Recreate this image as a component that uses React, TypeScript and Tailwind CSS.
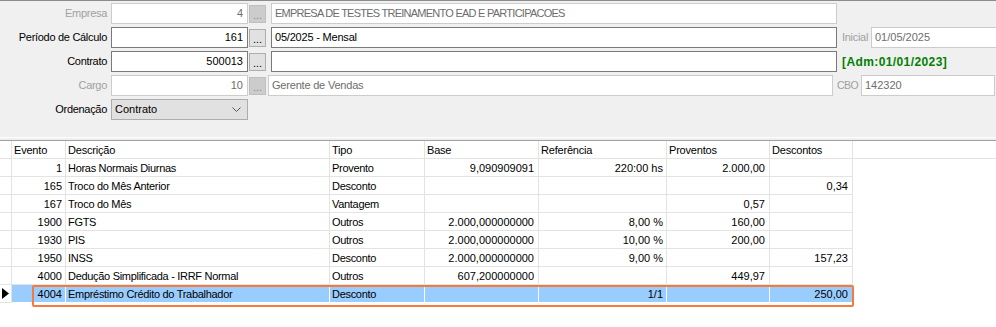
import React from "react";

type Row = {
  ev: string;
  desc: string;
  tipo: string;
  base: string;
  ref: string;
  prov: string;
  dsc: string;
  sel?: boolean;
};

const rows: Row[] = [
  { ev: "1", desc: "Horas Normais Diurnas", tipo: "Provento", base: "9,090909091", ref: "220:00 hs", prov: "2.000,00", dsc: "" },
  { ev: "165", desc: "Troco do Mês Anterior", tipo: "Desconto", base: "", ref: "", prov: "", dsc: "0,34" },
  { ev: "167", desc: "Troco do Mês", tipo: "Vantagem", base: "", ref: "", prov: "0,57", dsc: "" },
  { ev: "1900", desc: "FGTS", tipo: "Outros", base: "2.000,000000000", ref: "8,00 %", prov: "160,00", dsc: "" },
  { ev: "1930", desc: "PIS", tipo: "Outros", base: "2.000,000000000", ref: "10,00 %", prov: "200,00", dsc: "" },
  { ev: "1950", desc: "INSS", tipo: "Desconto", base: "2.000,000000000", ref: "9,00 %", prov: "", dsc: "157,23" },
  { ev: "4000", desc: "Dedução Simplificada - IRRF Normal", tipo: "Outros", base: "607,200000000", ref: "", prov: "449,97", dsc: "" },
  { ev: "4004", desc: "Empréstimo Crédito do Trabalhador", tipo: "Desconto", base: "", ref: "1/1", prov: "", dsc: "250,00", sel: true },
];

// label column ends at x=107, inputs start at 111
function Label({ text, disabled }: { text: string; disabled?: boolean }) {
  return (
    <div className={`w-[107px] shrink-0 text-right tracking-[-0.3px] ${disabled ? "text-[#a0a0a0]" : "text-black"}`}>{text}</div>
  );
}

function Lookup({ value, disabled }: { value: string; disabled?: boolean }) {
  return (
    <div className="flex items-center shrink-0">
      <div
        className={`w-[137px] h-[21px] bg-white border flex items-center justify-end pr-[4px] ${
          disabled ? "border-[#cccccc] text-[#6d6d6d]" : "border-[#7a7a7a] text-black"
        }`}
      >
        {value}
      </div>
      <div
        className={`ml-[1px] w-[17px] h-[18px] border flex items-end justify-center leading-[12px] pb-[1px] ${
          disabled ? "bg-[#cccccc] border-[#bfbfbf] text-[#8a8a8a]" : "bg-[#e1e1e1] border-[#adadad] text-black"
        }`}
      >
        ...
      </div>
    </div>
  );
}

function TextBox({ value, w, disabled, ml, caps }: { value: string; w: string; disabled?: boolean; ml: string; caps?: boolean }) {
  return (
    <div
      className={`${w} ${ml} shrink-0 h-[21px] bg-white border flex items-center pl-[3px] whitespace-nowrap overflow-hidden ${
        caps ? "tracking-[-0.75px]" : "tracking-[-0.2px]"
      } ${disabled ? "border-[#cccccc] text-[#6d6d6d]" : "border-[#7a7a7a] text-black"}`}
    >
      {value}
    </div>
  );
}

const cols = [
  { key: "ev", title: "Evento", w: "w-[54px]", right: true, pr: "pr-[3px]" },
  { key: "desc", title: "Descrição", w: "w-[264px]", right: false, pr: "" },
  { key: "tipo", title: "Tipo", w: "w-[95px]", right: false, pr: "" },
  { key: "base", title: "Base", w: "w-[114px]", right: true, pr: "pr-[4px]" },
  { key: "ref", title: "Referência", w: "w-[128px]", right: true, pr: "pr-[3px]" },
  { key: "prov", title: "Proventos", w: "w-[103px]", right: true, pr: "pr-[4px]" },
  { key: "dsc", title: "Descontos", w: "w-[83px]", right: true, pr: "pr-[4px]" },
] as const;

export default function App() {
  return (
    <div
      className="w-[996px] h-[327px] overflow-hidden bg-white text-[11px] flex flex-col"
      style={{ fontFamily: '"Liberation Sans", Arial, sans-serif' }}
    >
      {/* form panel */}
      <div className="h-[137px] shrink-0 bg-[#f0f0f0] border-t border-[#8c8c8c] pt-[2px] flex flex-col gap-[3px]">
        <div className="flex items-center h-[21px] gap-[4px]">
          <Label text="Empresa" disabled />
          <Lookup value="4" disabled />
          <TextBox value="EMPRESA DE TESTES TREINAMENTO EAD E PARTICIPACOES" w="w-[566px]" ml="ml-[1px]" disabled caps />
        </div>
        <div className="flex items-center h-[21px] gap-[4px]">
          <Label text="Período de Cálculo" />
          <Lookup value="161" />
          <TextBox value="05/2025 - Mensal" w="w-[566px]" ml="ml-[1px]" />
          <div className="ml-[1px] w-[25px] shrink-0 text-[#a0a0a0] tracking-[-0.3px]">Inicial</div>
          <div className="shrink-0 w-[140px] h-[21px] bg-white border border-[#cccccc] text-[#6d6d6d] flex items-center pl-[3px]">
            01/05/2025
          </div>
        </div>
        <div className="flex items-center h-[21px] gap-[4px]">
          <Label text="Contrato" />
          <Lookup value="500013" />
          <TextBox value="" w="w-[566px]" ml="ml-[1px]" />
          <div className="ml-[1px] shrink-0 text-[#008000] font-bold text-[12px] tracking-[0.4px]">[Adm:01/01/2023]</div>
        </div>
        <div className="flex items-center h-[21px] gap-[4px]">
          <Label text="Cargo" disabled />
          <Lookup value="10" disabled />
          <TextBox value="Gerente de Vendas" w="w-[565px]" ml="-ml-[2px]" disabled />
          <div className="w-[21px] shrink-0 text-[#a0a0a0] text-[10.5px] tracking-[-0.6px] whitespace-nowrap">CBO</div>
          <div className="-ml-[1px] shrink-0 w-[134px] h-[21px] bg-white border border-[#cccccc] text-[#6d6d6d] flex items-center pl-[3px]">
            142320
          </div>
        </div>
        <div className="flex items-center h-[21px] gap-[4px]">
          <Label text="Ordenação" />
          <div className="w-[137px] shrink-0 h-[21px] bg-[#e1e1e1] border border-[#adadad] flex items-center justify-between pl-[3px] pr-[6px] text-black">
            <span>Contrato</span>
            <svg width="9" height="5" viewBox="0 0 9 5" fill="none" stroke="#555" strokeWidth="1">
              <path d="M0.5 0.5 L4.5 4.5 L8.5 0.5" />
            </svg>
          </div>
        </div>
      </div>

      {/* splitter */}
      <div className="h-[1px] shrink-0 bg-white" />
      <div className="h-[2px] shrink-0 bg-[#f0f0f0]" />
      <div className="h-[1px] shrink-0 bg-[#a0a0a0]" />

      {/* grid */}
      <div className="relative flex-1 bg-white text-black">
        <div className="flex h-[18px] border-b border-[#e3e3e3]">
          <div className="w-[12px] shrink-0 border-r border-[#e3e3e3]" />
          {cols.map((c) => (
            <div key={c.key} className={`${c.w} shrink-0 border-r border-[#e3e3e3] pl-[2px] pt-[1px] flex items-center tracking-[-0.2px]`}>
              {c.title}
            </div>
          ))}
        </div>
        {rows.map((r) => (
          <div key={r.ev} className="flex h-[18px]">
            <div className="w-[12px] shrink-0 border-r border-b border-[#e3e3e3] flex items-center pl-[2px]">
              {r.sel && (
                <svg width="7" height="11" viewBox="0 0 7 11">
                  <path d="M0 0 L7 5.5 L0 11 Z" fill="#000" />
                </svg>
              )}
            </div>
            {cols.map((c) => (
              <div
                key={c.key}
                className={`${c.w} shrink-0 border-r border-b flex items-center pt-[1px] whitespace-nowrap overflow-hidden ${
                  c.right ? `justify-end ${c.pr}` : "pl-[2px] tracking-[-0.3px]"
                } ${r.sel ? "bg-[#99ccff] border-white" : "border-[#e3e3e3]"}`}
              >
                {r[c.key]}
              </div>
            ))}
          </div>
        ))}
        {/* highlight around the selected row */}
        <div className="absolute left-[32px] top-[144px] w-[822px] h-[22px] border-[2.5px] border-[#f47b3c] rounded-[2px] pointer-events-none" />
      </div>
    </div>
  );
}
